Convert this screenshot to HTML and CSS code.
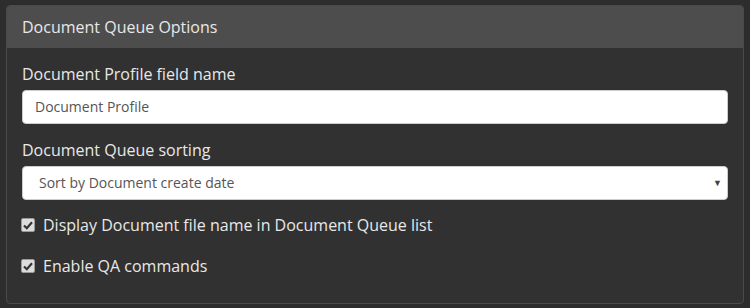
FILE: index.html
```html
<!DOCTYPE html>
<html>
<head>
<meta charset="utf-8">
<link rel="stylesheet" href="styles.css">
</head>
<body>
<div class="panel">
  <div class="panel-heading">Document Queue Options</div>
  <div class="panel-body">
    <div class="form-group">
      <label class="control-label">Document Profile field name</label>
      <div class="form-control">Document Profile</div>
    </div>
    <div class="form-group form-group-last">
      <label class="control-label">Document Queue sorting</label>
      <div class="form-control select">
        <span class="select-text">Sort by Document create date</span>
        <span class="caret">▼</span>
      </div>
    </div>
    <div class="checkbox">
      <span class="check"><svg width="10" height="9" viewBox="0 0 10 9"><path d="M1 4.5 L3.8 7.2 L9 1.2" fill="none" stroke="#333" stroke-width="2.2"/></svg></span>
      <span class="check-label">Display Document file name in Document Queue list</span>
    </div>
    <div class="checkbox">
      <span class="check"><svg width="10" height="9" viewBox="0 0 10 9"><path d="M1 4.5 L3.8 7.2 L9 1.2" fill="none" stroke="#333" stroke-width="2.2"/></svg></span>
      <span class="check-label">Enable QA commands</span>
    </div>
  </div>
</div>
</body>
</html>
```
FILE: styles.css
```css
html, body {
  margin: 0;
  padding: 0;
  background: #2d2d2d;
  font-family: "Open Sans", "Liberation Sans", sans-serif;
  color: #e6e6e6;
}
.panel {
  margin: 5px 6px 0 6px;
  height: 299px;
  box-sizing: border-box;
  background: #313131;
  border: 1px solid #4a4a4a;
  border-radius: 4px;
  overflow: hidden;
}
.panel-heading {
  background: #4d4d4d;
  height: 42px;
  box-sizing: border-box;
  padding: 0 15px;
  font-size: 16px;
  line-height: 42px;
  color: #e8e8e8;
}
.panel-body {
  padding: 15px 15px;
}
.form-group {
  margin-bottom: 15px;
}
.form-group-last {
  margin-bottom: 15px;
}
.control-label {
  display: block;
  font-size: 16px;
  line-height: 22px;
  margin-bottom: 5px;
  color: #e8e8e8;
}
.form-control {
  height: 34px;
  box-sizing: border-box;
  background: #fff;
  border: 1px solid #ccc;
  border-radius: 4px;
  padding: 0 12px;
  font-size: 14px;
  line-height: 32px;
  color: #555;
}
.select {
  display: flex;
  justify-content: space-between;
  padding: 0 5px 0 16px;
}
.caret {
  font-size: 9px;
  color: #444;
}
.checkbox {
  display: flex;
  align-items: center;
  gap: 8px;
  height: 20px;
  margin-bottom: 21px;
  font-size: 16px;
  color: #e8e8e8;
}
.check {
  width: 14px;
  height: 14px;
  box-sizing: border-box;
  margin-left: -1px;
  background: #dcdcdc;
  border: 1px solid #9a9a9a;
  border-radius: 2px;
  display: flex;
  align-items: center;
  justify-content: center;
}
```
